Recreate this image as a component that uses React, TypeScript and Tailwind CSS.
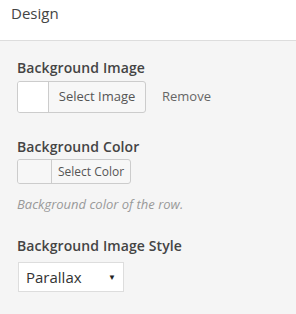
import React from "react";

const App = () => {
  return (
    <div
      className="w-[296px] h-[314px] bg-[#f5f5f5] text-[#444] overflow-hidden"
      style={{ fontFamily: '"Open Sans", sans-serif' }}
    >
      <div className="h-[41px] bg-white border-b border-[#dddddd] pl-[11px] pt-[2px]">
        <h3 className="text-[15px] leading-[22px] text-[#444]">Design</h3>
      </div>

      <div className="pl-[17px] pt-[16px]">
        <div className="text-[14px] font-semibold leading-[22px] text-[#444] tracking-[0.1px]">
          Background Image
        </div>
        <div className="mt-[2px] flex items-center">
          <div className="flex h-[32px] w-[129px] rounded-[3px] border border-[#cccccc] bg-[#f7f7f7] overflow-hidden">
            <div className="w-[31px] bg-white border-r border-[#cccccc]" />
            <div className="flex flex-1 items-center justify-center text-[13px] text-[#555]">
              Select Image
            </div>
          </div>
          <span className="ml-[16px] text-[13px] text-[#666]">Remove</span>
        </div>

        <div className="mt-[23px] text-[14px] font-semibold leading-[22px] text-[#444] tracking-[0.1px]">
          Background Color
        </div>
        <div className="mt-[1px] flex h-[25px] w-[114px] rounded-[3px] border border-[#cccccc] bg-[#f7f7f7] overflow-hidden">
          <div className="w-[34px] bg-[#f7f7f7] border-r border-[#cccccc]" />
          <div className="flex flex-1 items-center justify-center text-[12px] text-[#555]">
            Select Color
          </div>
        </div>
        <p className="mt-[11px] text-[13px] italic leading-[18px] text-[#999]">
          Background color of the row.
        </p>

        <div className="mt-[22px] text-[14px] font-semibold leading-[22px] text-[#444] tracking-[0.1px]">
          Background Image Style
        </div>
        <div className="mt-[5px] ml-[1px] flex h-[30px] w-[106px] items-center justify-between border border-[#dddddd] bg-white pl-[7px] pr-[7px]">
          <span className="text-[15px] text-[#333]">Parallax</span>
          <span className="text-[8px] text-[#222]">▼</span>
        </div>
      </div>
    </div>
  );
};

export default App;
